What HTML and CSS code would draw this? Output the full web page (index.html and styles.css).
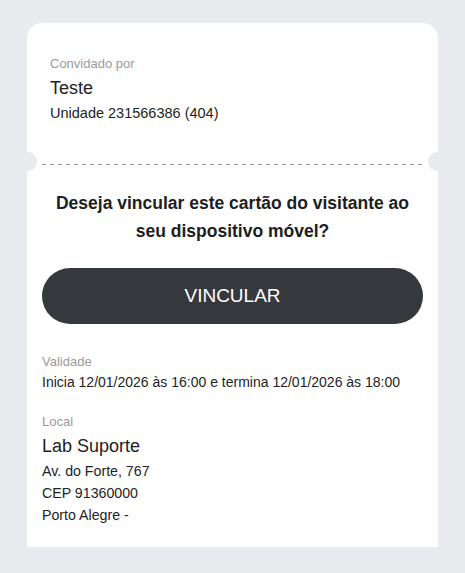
FILE: index.html
```html
<!DOCTYPE html>
<html lang="pt">
<head>
<meta charset="utf-8">
<link rel="stylesheet" href="styles.css">
</head>
<body>
<div class="page">
  <div class="card">
    <div class="top">
      <div class="label">Convidado por</div>
      <div class="big">Teste</div>
      <div class="unit">Unidade 231566386 (404)</div>
    </div>
    <div class="divider"><div class="dash"></div></div>
    <div class="bottom">
      <h1 class="question">Deseja vincular este cartão do visitante ao seu dispositivo móvel?</h1>
      <button class="btn">VINCULAR</button>
      <div class="block validity">
        <div class="label">Validade</div>
        <div class="text">Inicia 12/01/2026 às 16:00 e termina 12/01/2026 às 18:00</div>
      </div>
      <div class="block local">
        <div class="label">Local</div>
        <div class="big">Lab Suporte</div>
        <div class="addr">Av. do Forte, 767</div>
        <div class="addr">CEP 91360000</div>
        <div class="addr">Porto Alegre -</div>
      </div>
    </div>
  </div>
</div>
</body>
</html>
```
FILE: styles.css
```css
html, body {
  margin: 0;
  padding: 0;
}
body {
  background: #e9eaee;
  font-family: "Liberation Sans", Arial, sans-serif;
  color: #222426;
  width: 465px;
  height: 573px;
  overflow: hidden;
}
.page {
  padding: 23px 27px 0 27px;
}
.card {
  background: #ffffff;
  border-radius: 15px 15px 0 0;
  width: 411px;
  overflow: hidden;
}
.top {
  padding: 32px 23px 0 23px;
  height: 109px;
  box-sizing: border-box;
}
.label {
  font-size: 13px;
  line-height: 18px;
  color: #9a9a9c;
}
.top .big {
  margin-top: 3px;
}
.big {
  font-size: 18px;
  line-height: 24px;
  color: #1f2124;
}
.unit {
  margin-top: 3px;
  font-size: 14.5px;
  line-height: 20px;
}
.divider {
  position: relative;
  height: 33px;
  padding: 0 15px;
}
.divider::before,
.divider::after {
  content: "";
  position: absolute;
  top: 20px;
  width: 19px;
  height: 19px;
  border-radius: 50%;
  background: #e9eaee;
}
.divider::before { left: -9px; }
.divider::after { right: -9px; }
.dash {
  position: relative;
  top: 32px;
  height: 1px;
  background: repeating-linear-gradient(to right, #8d8f93 0 4px, transparent 4px 8px);
}
.bottom {
  padding: 24px 15px 21px 15px;
}
.question {
  margin: 0;
  font-size: 17.5px;
  line-height: 28px;
  font-weight: bold;
  text-align: center;
  color: #1c1e21;
  padding: 0 8px;
}
.btn {
  display: block;
  margin-top: 23px;
  width: 100%;
  height: 56px;
  border: none;
  border-radius: 28px;
  background: #35383d;
  color: #ffffff;
  font-family: "Liberation Sans", Arial, sans-serif;
  font-size: 19px;
}
.validity {
  margin-top: 29px;
}
.validity .text {
  margin-top: 1px;
  font-size: 14px;
  line-height: 20px;
}
.local {
  margin-top: 21px;
}
.local .big {
  margin-top: 3px;
}
.addr {
  font-size: 14.2px;
  line-height: 22px;
}
.local .big + .addr {
  margin-top: 2px;
}
```
